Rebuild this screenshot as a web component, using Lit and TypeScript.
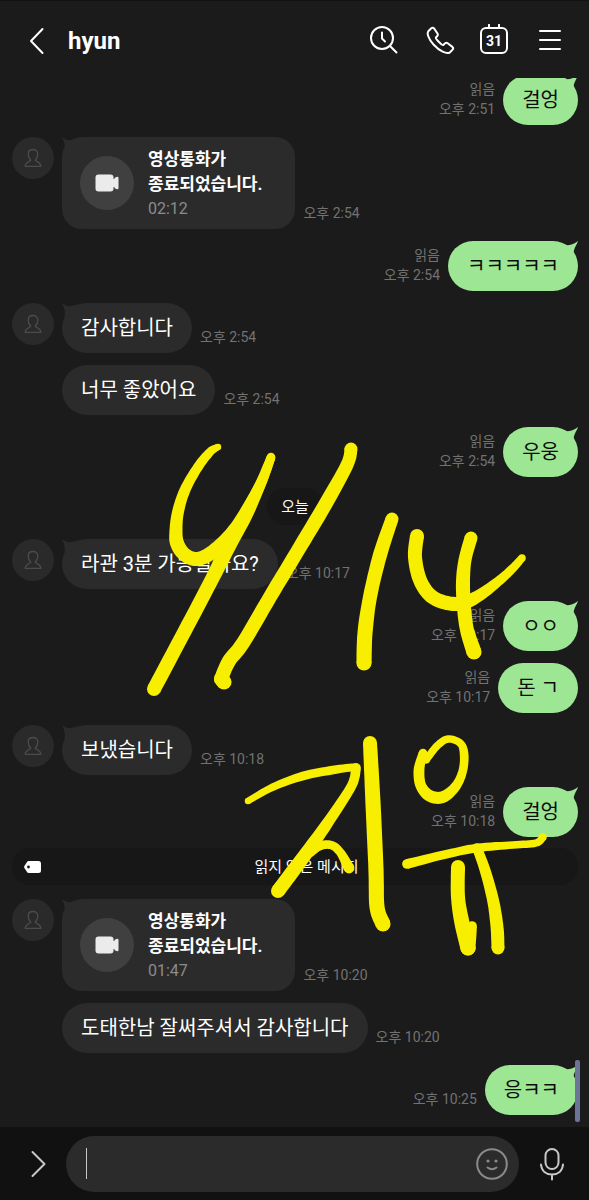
import { LitElement, html, svg, css } from "lit";
import { customElement, property } from "lit/decorators.js";

type Item =
  | { kind: "in" | "out"; text: string; time: string; first?: boolean; read?: boolean }
  | { kind: "call"; length: string; time: string }
  | { kind: "day" | "unread"; text: string };

const ITEMS: Item[] = [
  { kind: "out", text: "걸엉", time: "오후 2:51", first: true, read: true },
  { kind: "call", length: "02:12", time: "오후 2:54" },
  { kind: "out", text: "ㅋㅋㅋㅋㅋ", time: "오후 2:54", first: true, read: true },
  { kind: "in", text: "감사합니다", time: "오후 2:54", first: true },
  { kind: "in", text: "너무 좋았어요", time: "오후 2:54" },
  { kind: "out", text: "우웅", time: "오후 2:54", first: true, read: true },
  { kind: "day", text: "오늘" },
  { kind: "in", text: "라관 3분 가능할까요?", time: "오후 10:17", first: true },
  { kind: "out", text: "ㅇㅇ", time: "오후 10:17", first: true, read: true },
  { kind: "out", text: "돈 ㄱ", time: "오후 10:17", read: true },
  { kind: "in", text: "보냈습니다", time: "오후 10:18", first: true },
  { kind: "out", text: "걸엉", time: "오후 10:18", first: true, read: true },
  { kind: "unread", text: "읽지 않은 메시지" },
  { kind: "call", length: "01:47", time: "오후 10:20" },
  { kind: "in", text: "도태한남 잘써주셔서 감사합니다", time: "오후 10:20" },
  { kind: "out", text: "응ㅋㅋ", time: "오후 10:25", first: true },
];

// Pen strokes: each point is x, y, pen width.
type Pt = [number, number, number];
const STROKES: Pt[][] = [
  [[218, 447, 6], [210, 452, 8], [198, 467, 9], [185, 490, 10], [178, 512, 11], [176, 530, 12], [177, 543, 13], [184, 554, 13], [196, 559, 13], [211, 553, 13], [230, 535, 12], [245, 513, 11], [260, 485, 10], [271, 457, 8]],
  [[271, 458, 8], [263, 479, 9], [247, 512, 13], [230, 543, 14], [210, 583, 13], [180, 640, 13], [154, 689, 13]],
  [[351, 449, 12], [347, 465, 12], [325, 505, 13], [297, 552, 13], [270, 597, 13], [243, 643, 13], [229, 661, 13], [221, 679, 13]],
  [[221, 679, 13], [224, 682, 14]],
  [[392, 519, 12], [380, 555, 13], [370, 597, 13], [365, 633, 14], [364, 663, 14]],
  [[417, 536, 13], [415, 557, 13], [420, 580, 13], [431, 596, 13], [447, 603, 13], [463, 603, 13], [480, 595, 11], [500, 580, 9], [513, 568, 8], [522, 558, 7]],
  [[471, 538, 12], [465, 560, 12], [463, 582, 13], [464, 607, 13], [467, 630, 13], [474, 652, 14]],
  [[248, 801, 6], [273, 787, 7], [303, 776, 8], [333, 770, 8], [356, 767, 7]],
  [[356, 768, 9], [352, 785, 9], [333, 815, 10], [310, 848, 12], [293, 871, 13], [278, 891, 13]],
  [[310, 853, 8], [320, 846, 8], [331, 845, 8], [340, 852, 8], [349, 868, 10]],
  [[370, 743, 13], [373, 803, 14], [376, 870, 14], [377, 907, 14], [383, 924, 14]],
  [[423, 753, 8], [419, 770, 10], [421, 786, 10], [430, 796, 11], [443, 797, 11], [456, 786, 9], [463, 770, 8], [464, 753, 8], [460, 743, 7], [448, 739, 7], [437, 746, 7], [426, 760, 7]],
  [[407, 864, 9], [443, 855, 8], [477, 848, 8], [513, 845, 7], [536, 843, 7], [543, 837, 7]],
  [[458, 867, 13], [458, 897, 13], [462, 923, 14], [468, 948, 14]],
  [[472, 926, 9], [471, 936, 10], [468, 948, 14]],
  [[477, 848, 9], [485, 870, 10], [493, 900, 11], [497, 927, 12], [498, 948, 12]],
];
const PEN = 1.08;

const spline = (a: number, b: number, c: number, d: number, t: number) =>
  0.5 * (2 * b + (c - a) * t + (2 * a - 5 * b + 4 * c - d) * t * t + (3 * b - a - 3 * c + d) * t * t * t);

function outline(pts: Pt[]): string {
  const line: Pt[] = [];
  for (let i = 0; i < pts.length - 1; i++) {
    const p = [pts[Math.max(i - 1, 0)], pts[i], pts[i + 1], pts[Math.min(i + 2, pts.length - 1)]];
    for (let s = 0; s < 8; s++) {
      line.push([0, 1, 2].map((k) => spline(p[0][k], p[1][k], p[2][k], p[3][k], s / 8)) as Pt);
    }
  }
  line.push(pts[pts.length - 1]);
  const left: string[] = [];
  const right: string[] = [];
  line.forEach(([x, y, w], i) => {
    const a = line[Math.max(i - 1, 0)];
    const b = line[Math.min(i + 1, line.length - 1)];
    const len = Math.hypot(b[0] - a[0], b[1] - a[1]) || 1;
    const r = (w * PEN) / 2;
    const nx = (-(b[1] - a[1]) / len) * r;
    const ny = ((b[0] - a[0]) / len) * r;
    left.push(`${(x + nx).toFixed(1)} ${(y + ny).toFixed(1)}`);
    right.unshift(`${(x - nx).toFixed(1)} ${(y - ny).toFixed(1)}`);
  });
  return `M${left.concat(right).join("L")}Z`;
}

@customElement("pen-note")
class PenNote extends LitElement {
  static styles = css`
    :host { display: block; pointer-events: none; }
    svg { display: block; width: 100%; height: 100%; fill: #f8ee00; }
  `;
  render() {
    return html`<svg viewBox="0 0 589 1200" preserveAspectRatio="xMidYMin meet" role="img" aria-label="9/14 지유">
      ${STROKES.map((s) => svg`
        <path d=${outline(s)}></path>
        ${[s[0], s[s.length - 1]].map(([x, y, w]) => svg`<circle cx=${x} cy=${y} r=${(w * PEN) / 2}></circle>`)}
      `)}
    </svg>`;
  }
}

@customElement("chat-row")
class ChatRow extends LitElement {
  @property({ attribute: false }) item!: Item;

  static styles = css`
    :host { display: block; }
    .row { display: flex; align-items: flex-end; gap: 8px; }
    .out { justify-content: flex-end; }
    .avatar {
      width: 42px; height: 42px; flex: none; align-self: flex-start;
      border-radius: 50%; background: #2a2a2a;
      display: flex; align-items: center; justify-content: center;
    }
    .blank { background: none; }
    .bubble {
      position: relative; box-sizing: border-box; min-height: 50px;
      padding: 11px 19px; border-radius: 25px;
      font-size: 20px; line-height: 28px;
      background: #2b2b2b; color: #fff;
    }
    .out .bubble { background: #9de693; color: #0c0c0c; }
    .tail { position: absolute; top: 0; left: 0; }
    .out .tail { left: auto; right: 0; }
    .meta {
      padding-bottom: 6px; flex: none;
      font-size: 14px; line-height: 20px; color: #727272;
    }
    .out .meta { text-align: right; }
    .card {
      display: flex; align-items: center; gap: 14px; min-height: 92px;
      padding: 0 33px 0 18px; border-radius: 20px;
    }
    .disc {
      width: 54px; height: 54px; flex: none; border-radius: 50%; background: #404040;
      display: flex; align-items: center; justify-content: center;
    }
    .call { padding-top: 2px; font-size: 17px; line-height: 25px; font-weight: 700; }
    .length { font-size: 16px; line-height: 24px; font-weight: 400; color: #8c8c8c; }
    .pill {
      display: flex; align-items: center; box-sizing: border-box;
      min-height: 37px; margin: -1px 0 2px; padding: 0 6px 0 12px;
      border-radius: 18px; background: #171717;
      font-size: 15px; line-height: 20px; color: #fff;
    }
    .pill span { flex: 1; text-align: center; }
    .day { width: fit-content; margin-left: auto; margin-right: auto; padding: 0 14px; }
    svg { display: block; }
  `;

  private avatar(shown: boolean) {
    return shown
      ? html`<span class="avatar"><svg width="18" height="20" viewBox="0 0 18 20" fill="none" stroke="#4c4c4c" stroke-width="1.3" stroke-linejoin="round">
          <path d="M6.800 12.200C5.200 10.800 4.200 8.800 4.200 6.300C4.200 3.300 6.300 1.500 9 1.500S13.800 3.300 13.800 6.300C13.800 8.800 12.800 10.800 11.200 12.200C11.500 13.400 16.800 14 16.800 18.300H1.200C1.200 14 6.500 13.400 6.800 12.200Z"></path>
        </svg></span>`
      : html`<span class="avatar blank"></span>`;
  }

  private leftTail() {
    return html`<svg class="tail" width="20" height="16" viewBox="0 0 20 16" fill="#2b2b2b"><path d="M0 0C3 2.500 6 3.500 9 3L18 1V10L2.500 14.500C3.500 8 2 4 0 0Z"></path></svg>`;
  }

  private rightTail() {
    return html`<svg class="tail" width="18" height="16" viewBox="0 0 18 16" fill="#9de693"><path d="M18 0C17 3.500 14.500 6 13.500 11.500L4 12V3L7 4.200C10.500 4.200 14 3 18 0Z"></path></svg>`;
  }

  render() {
    const it = this.item;
    if (it.kind === "day") return html`<div class="pill day">${it.text}</div>`;
    if (it.kind === "unread") {
      return html`<div class="pill">
        <svg width="17" height="12" viewBox="0 0 17 12"><path fill="#fff" fill-rule="evenodd" d="M4.500 0H14.500Q17 0 17 2.500V9.500Q17 12 14.500 12H4.500Q3.800 12 3.200 11.300L.4 7Q-.2 6 .4 5L3.200.7Q3.800 0 4.500 0ZM4.500 4.600A1.400 1.400 0 1 0 4.500 7.400A1.400 1.400 0 1 0 4.500 4.600Z"></path></svg>
        <span>${it.text}</span>
      </div>`;
    }
    if (it.kind === "call") {
      return html`<div class="row">
        ${this.avatar(true)}
        <div class="bubble card">
          ${this.leftTail()}
          <span class="disc"><svg width="24" height="18" viewBox="0 0 24 18" fill="#ebebeb"><rect x="0.500" y="0.500" width="18" height="17" rx="3"></rect><path d="M18 5H19.500V4Q20 3.500 21.500 3Q23.500 2.300 23.500 4V14Q23.500 15.700 21.500 15Q20 14.500 19.500 14V13H18Z"></path></svg></span>
          <div class="call">영상통화가<br />종료되었습니다.<div class="length">${it.length}</div></div>
        </div>
        <div class="meta">${it.time}</div>
      </div>`;
    }
    if (it.kind === "out") {
      return html`<div class="row out">
        <div class="meta">${it.read ? html`읽음<br />` : ""}${it.time}</div>
        <div class="bubble">${it.first ? this.rightTail() : ""}${it.text}</div>
      </div>`;
    }
    return html`<div class="row">
      ${this.avatar(!!it.first)}
      <div class="bubble">${it.first ? this.leftTail() : ""}${it.text}</div>
      <div class="meta">${it.time}</div>
    </div>`;
  }
}

@customElement("app-root")
class AppRoot extends LitElement {
  static styles = css`
    :host {
      position: relative; display: flex; flex-direction: column;
      height: 100vh; overflow: hidden; background: #1b1b1b; color: #fff;
      font-family: Roboto, "Noto Sans CJK KR", sans-serif;
    }
    header {
      box-sizing: border-box; flex: none; min-height: 78px; padding: 2px 22px 0 24px;
      border-top: 1px solid #111;
      display: flex; align-items: center; gap: 18px;
    }
    h1 { flex: 1; margin: 0; font-size: 24px; line-height: 32px; font-weight: 700; }
    button { padding: 0; border: 0; background: none; color: inherit; font: inherit; cursor: pointer; display: block; flex: none; }
    svg { display: block; fill: none; stroke: currentColor; stroke-width: 2; stroke-linecap: round; stroke-linejoin: round; }
    .tools { display: flex; gap: 22px; }
    .date { fill: currentColor; stroke: none; font-size: 14px; font-weight: 700; }
    .chat {
      position: relative; flex: 1; min-height: 0; overflow-y: auto; scrollbar-width: none;
      display: flex; flex-direction: column-reverse;
    }
    .list { display: flex; flex-direction: column; gap: 12px; padding: 0 11px 12px 12px; }
    .thumb {
      position: absolute; right: 9px; bottom: 78px; width: 5px; height: 62px;
      border-radius: 2px; background: #6c7598;
    }
    footer {
      box-sizing: border-box; flex: none; min-height: 73px; padding: 0 20px 0 22px;
      background: #111; color: #c8c8c8;
      display: flex; align-items: center; gap: 16px;
    }
    .more { margin-right: -4px; }
    .field {
      flex: 1; min-width: 0; height: 56px; border-radius: 28px; background: #2b2b2b;
      display: flex; align-items: center; padding: 0 10px 0 20px;
    }
    .caret { width: 1px; height: 31px; flex: none; background: #c8c8c8; }
    input {
      flex: 1; min-width: 0; padding: 0 6px; border: 0; outline: none; background: none;
      color: #fff; font: 20px/28px Roboto, "Noto Sans CJK KR", sans-serif;
    }
    .smile { color: #8a8a8a; }
    .dot { fill: currentColor; stroke: none; }
    pen-note { position: absolute; inset: 0; }
  `;

  render() {
    return html`
      <header>
        <button aria-label="뒤로"><svg width="26" height="34" viewBox="0 0 26 34"><path d="M18.500 5L7 17L18.500 29"></path></svg></button>
        <h1>hyun</h1>
        <div class="tools">
          <button aria-label="검색"><svg width="34" height="34" viewBox="-1 1 34 34"><circle cx="16" cy="15" r="11"></circle><path d="M24 23L30.500 29.500M16 9.500V15.500L19 18.500"></path></svg></button>
          <button aria-label="통화"><svg width="34" height="34" viewBox="-2 0 34 34"><path d="M8.300 4.300L5.300 7.300C3.800 9 5 14.500 10.500 20.500C16.500 27 23.500 30.500 27 28.300L29.600 25.600C30.300 24.800 30.200 23.600 29.400 22.900L24.700 19.200C23.900 18.600 22.800 18.600 22.100 19.300L20.300 21C19.300 21.800 12.300 14.800 12.900 13.500L14.400 11.800C15 11.100 15 10.200 14.500 9.500L11.300 4.700C10.500 3.600 9.300 3.400 8.300 4.300Z"></path></svg></button>
          <button aria-label="일정"><svg width="34" height="34" viewBox="0 1 34 34"><rect x="4" y="5" width="26" height="25" rx="5"></rect><path d="M12 1.800V5M22 1.800V5"></path><text class="date" x="17" y="23" text-anchor="middle">31</text></svg></button>
          <button aria-label="메뉴"><svg width="34" height="34" viewBox="0 1 34 34"><path d="M7 8H27M7 17H27M7 26H27"></path></svg></button>
        </div>
      </header>
      <main class="chat">
        <div class="list">${ITEMS.map((item) => html`<chat-row .item=${item}></chat-row>`)}</div>
      </main>
      <footer>
        <button class="more" aria-label="더보기"><svg width="32" height="32" viewBox="0 0 32 32"><path d="M10.500 4L22.500 16L10.500 28"></path></svg></button>
        <div class="field">
          <span class="caret"></span>
          <input type="text" aria-label="메시지 입력" />
          <button class="smile" aria-label="스티커"><svg width="34" height="34" viewBox="0 0 34 34"><circle cx="17" cy="17" r="14.800"></circle><path d="M12.500 20.500Q17 23.800 21.500 20.500"></path><circle class="dot" cx="13" cy="14" r="1.600"></circle><circle class="dot" cx="21" cy="14" r="1.600"></circle></svg></button>
        </div>
        <button aria-label="음성 메시지"><svg width="34" height="36" viewBox="0 0 34 36"><rect x="10.500" y="3" width="13" height="20" rx="6.500"></rect><path d="M6 18.500C6.500 25 11 28.500 17 28.500S27.500 25 28 18.500M17 28.500V33.500"></path></svg></button>
      </footer>
      <span class="thumb"></span>
      <pen-note></pen-note>
    `;
  }
}
